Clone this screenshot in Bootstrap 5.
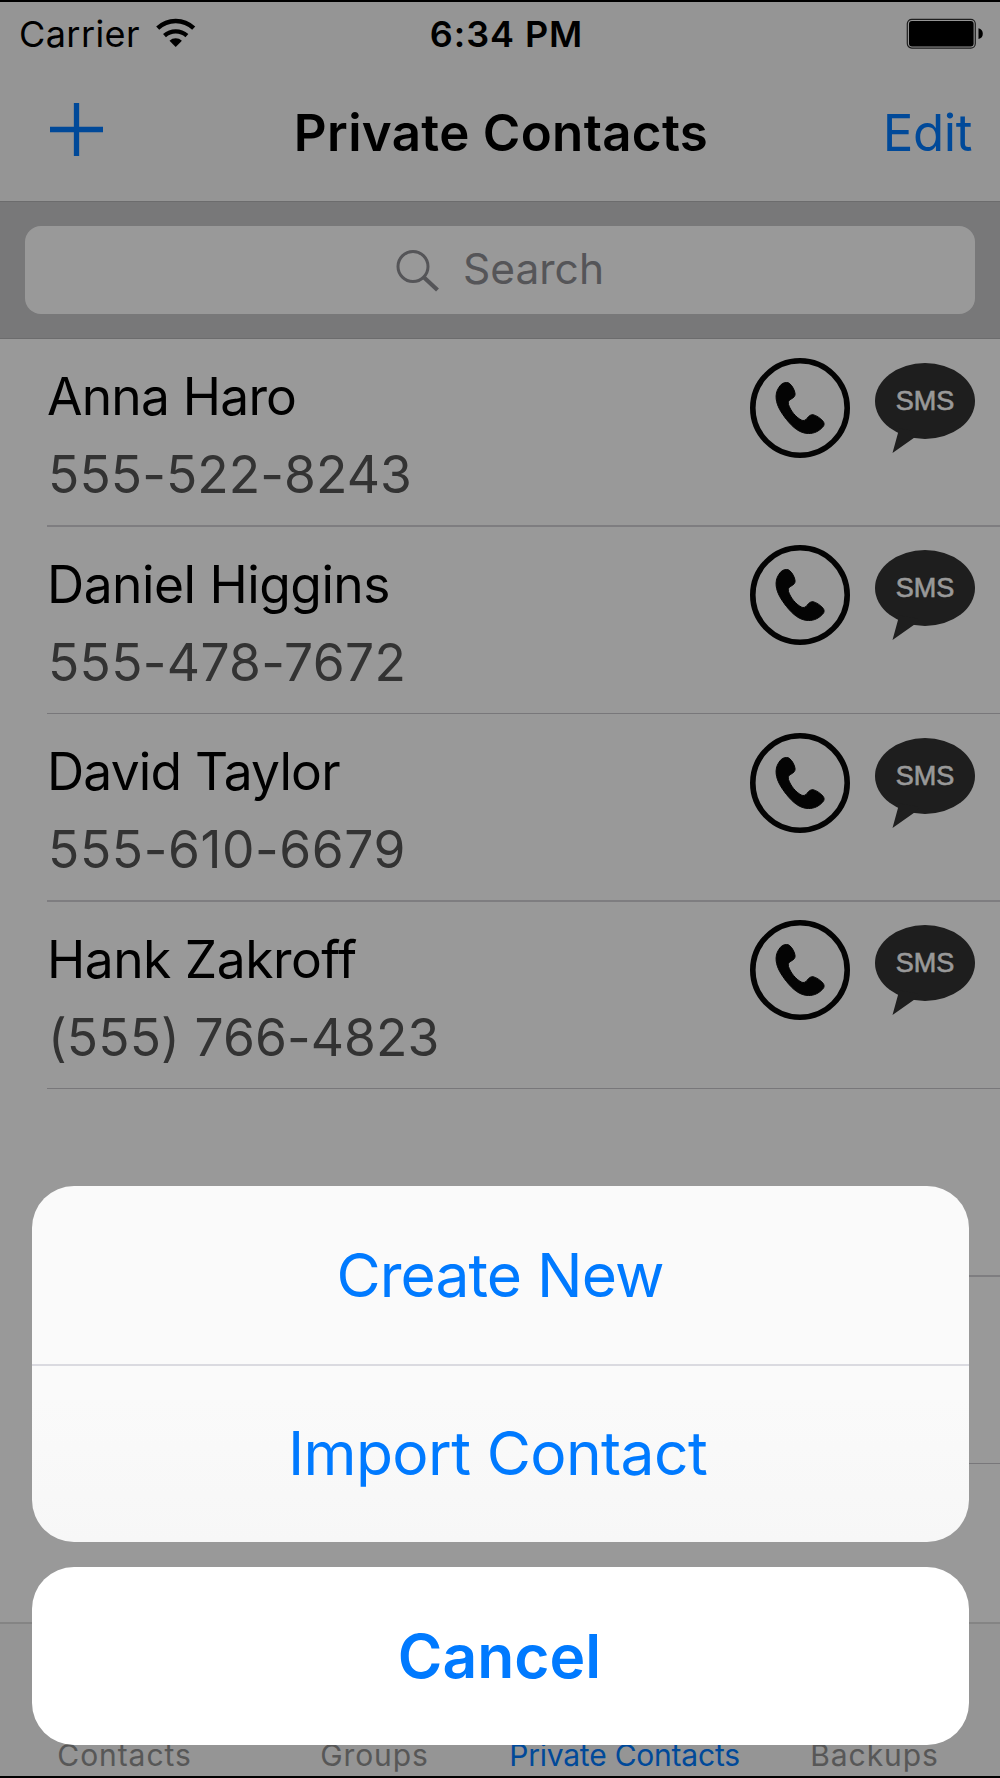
<!DOCTYPE html>
<html lang="en">
<head>
<meta charset="utf-8">
<meta name="viewport" content="width=device-width, initial-scale=1">
<title>Private Contacts</title>
<link href="https://cdn.jsdelivr.net/npm/bootstrap@5.3.0/dist/css/bootstrap.min.css" rel="stylesheet">
<style>
  body { font-family: Inter, "Liberation Sans", sans-serif; color: #000; background: #fff; }
  .screen { width: 1000px; height: 1778px; border-top: 2px solid #000; border-bottom: 2px solid #000; }
  .bar-bg { background: #f8f8f8; }
  .ios-blue { color: #007aff; }

  .status-bar { height: 63px; padding: 0 17px 0 19px; font-size: 36px; line-height: 63px; }
  .status-side { flex: 1 1 0; }
  .carrier { letter-spacing: .425px; padding-top: 1px; }
  .clock { letter-spacing: .95px; margin-left: 11px; padding-top: 1px; }
  .wifi { margin: 0 0 2px 15px; }

  .title-bar { height: 136px; padding: 0 28px; font-size: 51px; line-height: 136px; }
  .title-text { letter-spacing: .336px; padding-left: 2px; }
  .edit-link { letter-spacing: -.411px; }
  .plus-icon { margin: 0 0 8px 22px; }

  .search-strip { background: #c8c8ca; border-top: 1px solid #b4b4b6; border-bottom: 1px solid #b4b4b6; padding: 24px 25px; }
  .search-field { height: 88px; border-radius: 16px; background: #fff; color: #8e8e93; font-size: 42.5px; line-height: 84px; }
  .search-field svg { margin: 2px 24px 0 0; }
  .search-field span { padding-bottom: 2px; }

  .contact-list { margin-left: 47px; }
  .contact-row { height: 187px; padding: 18px 25px 0 0; border-bottom: 1px solid #c8c7cc; }
  .contact-row:nth-child(odd) { height: 188px; border-bottom: 2px solid #d2d1d5; }
  .contact-name, .contact-phone { font-size: 51.5px; line-height: 78px; white-space: nowrap; }
  .contact-name { letter-spacing: -.5px; }
  .contact-row:nth-child(odd) .contact-name { letter-spacing: -.8px; }
  .contact-phone { color: #555; letter-spacing: .08px; padding-left: 1px; }
  .contact-row:nth-child(2) .contact-phone { letter-spacing: .3px; }
  .contact-row:nth-child(3) .contact-phone { letter-spacing: .57px; }
  .contact-icons { gap: 25px; }
  .contact-row:nth-child(odd) .contact-icons { padding-top: 1px; }
  .sms-label { font: 27px "Liberation Sans", Arial, sans-serif; fill: #fff; stroke: #fff; stroke-width: .6px; }

  .tab-strip { height: 154px; border-top: 2px solid #dcdcdc; color: #929292; font-size: 30px; line-height: 41px; }
  .tab-item { letter-spacing: .92px; padding-right: 1px; }
  .tab-item.current { letter-spacing: -.219px; }

  .dimmer { background: rgba(0, 0, 0, .4); }
  .sheet { left: 31.5px; right: 31.5px; top: 1186px; gap: 25px; font-size: 60.5px; }
  .sheet-group { border-radius: 42px; background: linear-gradient(#fafafa 60%, #f7f7f7); }
  .sheet-action { height: 178px; line-height: 178px; letter-spacing: -.95px; }
  .sheet-action + .sheet-action { line-height: 175px; border-top: 2px solid #dadae0; letter-spacing: -.61px; padding-right: 5px; }
  .sheet-cancel { height: 178px; line-height: 179px; border-radius: 42px; letter-spacing: .05px; padding-right: 1px; }
</style>
</head>
<body>
<svg class="d-none">
  <symbol id="call" viewBox="0 0 100 100">
    <circle cx="50" cy="50" r="47.200" fill="none" stroke="#080808" stroke-width="5.600"/>
    <path fill="#080808" stroke="#080808" stroke-width="1" d="M36.700 24.500C33.500 24.300 30.600 26.300 28.800 29.500C26.500 33 25.700 37 26.200 41C27 48 31 54.500 36.500 61.500C42.500 69 49.500 75.500 58.500 75.500C64.500 75.600 69 73 72.600 69.200C74.500 67.300 74.600 65.200 73 63.200C70.500 60.300 66.500 57.400 63 56.700C60.500 56.500 58.800 58 57.200 60.200C55.600 62.300 53.500 63.200 51.300 62C45.500 59 40.500 52.500 38.500 46.500C37.900 44 38.600 42.500 40.800 41.300C43.500 39.800 45.300 38.200 45.100 35.700C44.600 32 42.400 28 39.700 25.600C38.800 24.800 37.800 24.500 36.700 24.500Z"/>
  </symbol>
  <symbol id="sms" viewBox="0 0 100 100">
    <ellipse cx="50" cy="43" rx="50" ry="38" fill="#323232"/>
    <path d="M22 70L23 75L17.500 95L39.500 79.500L45 74Z" fill="#323232"/>
    <text x="50" y="51.500" text-anchor="middle" class="sms-label">SMS</text>
  </symbol>
</svg>

<div class="screen position-relative d-flex flex-column overflow-hidden">
  <header class="bar-bg">
    <div class="status-bar d-flex align-items-center">
      <div class="status-side d-flex align-items-center">
        <span class="carrier">Carrier</span>
        <svg class="wifi" width="42" height="32" viewBox="155 16 42 32" fill="none" stroke="#000" stroke-width="4.400">
          <path d="M157.700 27.200A26 26 0 0 1 193.700 27.200"/>
          <path d="M164.500 34.600A17 17 0 0 1 186.900 34.600"/>
          <path d="M169.500 39.700A9.300 9.300 0 0 1 181.900 39.700L175.700 46Z" fill="#000" stroke="none"/>
        </svg>
      </div>
      <span class="clock fw-semibold">6:34 PM</span>
      <div class="status-side d-flex justify-content-end">
        <svg width="77" height="32" viewBox="0 0 77 32">
          <rect x="1.300" y="1.300" width="68" height="28.800" rx="4.500" fill="none" stroke="#333" stroke-width="1.200"/>
          <rect x="3" y="3" width="64.600" height="25.400" rx="3" fill="#000"/>
          <path d="M72.500 10.300Q76.800 11.500 76.800 15.700T72.500 21.100Z" fill="#000"/>
        </svg>
      </div>
    </div>
    <nav class="title-bar d-flex align-items-center">
      <div class="status-side d-flex align-items-center">
        <svg class="plus-icon" width="53" height="53" viewBox="0 0 53 53" stroke="#007aff" stroke-width="5.300"><path d="M26.500 0V53M0 26.500H53"/></svg>
      </div>
      <span class="title-text fw-semibold">Private Contacts</span>
      <span class="status-side text-end ios-blue edit-link">Edit</span>
    </nav>
  </header>

  <div class="search-strip">
    <div class="search-field d-flex justify-content-center align-items-center">
      <svg width="43" height="42" viewBox="0 0 43 42" fill="none" stroke="#8e8e93"><circle cx="17" cy="16.500" r="15" stroke-width="3"/><path d="M27.500 27L41.500 40" stroke-width="4.200"/></svg>
      <span>Search</span>
    </div>
  </div>

  <main class="contact-list flex-grow-1 overflow-hidden">
    <div class="contact-row d-flex justify-content-between align-items-start">
      <div><div class="contact-name">Anna Haro</div><div class="contact-phone">555-522-8243</div></div>
      <div class="contact-icons d-flex"><svg width="100" height="100"><use href="#call"/></svg><svg width="100" height="100"><use href="#sms"/></svg></div>
    </div>
    <div class="contact-row d-flex justify-content-between align-items-start">
      <div><div class="contact-name">Daniel Higgins</div><div class="contact-phone">555-478-7672</div></div>
      <div class="contact-icons d-flex"><svg width="100" height="100"><use href="#call"/></svg><svg width="100" height="100"><use href="#sms"/></svg></div>
    </div>
    <div class="contact-row d-flex justify-content-between align-items-start">
      <div><div class="contact-name">David Taylor</div><div class="contact-phone">555-610-6679</div></div>
      <div class="contact-icons d-flex"><svg width="100" height="100"><use href="#call"/></svg><svg width="100" height="100"><use href="#sms"/></svg></div>
    </div>
    <div class="contact-row d-flex justify-content-between align-items-start">
      <div><div class="contact-name">Hank Zakroff</div><div class="contact-phone">(555) 766-4823</div></div>
      <div class="contact-icons d-flex"><svg width="100" height="100"><use href="#call"/></svg><svg width="100" height="100"><use href="#sms"/></svg></div>
    </div>
    <div class="contact-row"></div>
    <div class="contact-row"></div>
  </main>

  <footer class="tab-strip bar-bg d-flex align-items-end text-center flex-shrink-0">
    <div class="tab-item w-25">Contacts</div>
    <div class="tab-item w-25">Groups</div>
    <div class="tab-item w-25 current ios-blue text-nowrap">Private Contacts</div>
    <div class="tab-item w-25">Backups</div>
  </footer>

  <div class="dimmer position-absolute top-0 start-0 w-100 h-100"></div>
</div>

<div class="sheet position-absolute d-flex flex-column text-center ios-blue">
  <div class="sheet-group">
    <div class="sheet-action">Create New</div>
    <div class="sheet-action">Import Contact</div>
  </div>
  <div class="sheet-cancel bg-white fw-semibold">Cancel</div>
</div>
<script src="https://cdn.jsdelivr.net/npm/bootstrap@5.3.0/dist/js/bootstrap.bundle.min.js"></script>
</body>
</html>
